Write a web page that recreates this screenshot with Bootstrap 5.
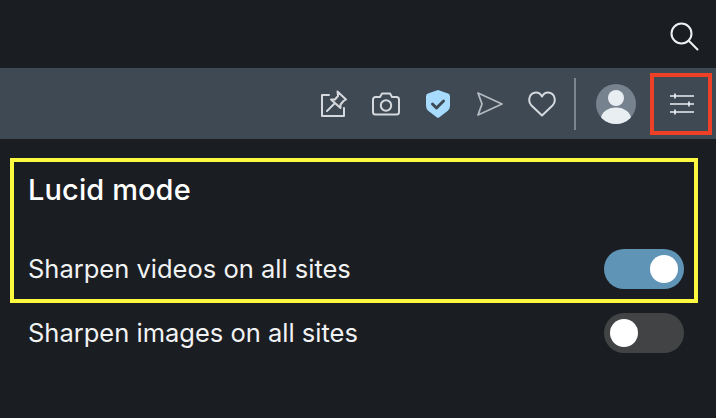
<!DOCTYPE html>
<html lang="en">
<head>
<meta charset="utf-8">
<title>Lucid mode</title>
<link rel="stylesheet" href="https://cdn.jsdelivr.net/npm/bootstrap@5.3.0/dist/css/bootstrap.min.css">
<style>
html, body { height: 100%; }
body { background: #1a1d21; color: #f4f5f6; font-family: Inter, "Liberation Sans", sans-serif; overflow: hidden; }
.top-strip { height: 68px; padding: 5px 17px 0 0; }
.tool-strip { height: 71px; background: #3e4954; }
.tool-btn { width: 52px; height: 52px; }
.tool-rule { width: 2px; height: 52px; background: #7c8690; margin: 0 20px 0 6px; }
.avatar-disc { width: 40px; height: 40px; }
.menu-frame { width: 62px; height: 62px; border: 4px solid #ee4026; margin: 0 4px 0 14px; padding-left: 2px; }
.panel-zone { padding: 19px 18px 0 10px; }
.lucid-frame { height: 145px; border: 4px solid #fdf93f; padding: 0 10px 10px 14px; }
.lucid-title { font-size: 29px; font-weight: 500; letter-spacing: .1px; line-height: 1; margin: 0; padding-top: 13px; color: #fff; }
.opt-label { font-size: 25.5px; line-height: 44px; color: #f1f2f3; }
.opt-row { height: 40px; }
.opt-plain { margin-top: 10px; padding: 0 14px 0 18px; }
.form-switch.lucid-switch { padding: 0; margin: 0; min-height: 0; height: 40px; }
.form-switch.lucid-switch .form-check-input { width: 80px; height: 40px; margin: 0; float: none; display: block; border: 0; border-radius: 20px; background-color: #424345; background-image: url("data:image/svg+xml,%3csvg xmlns='http://www.w3.org/2000/svg' viewBox='-4 -4 8 8'%3e%3ccircle r='2.8' fill='%23fff'/%3e%3c/svg%3e"); box-shadow: none; }
.form-switch.lucid-switch .form-check-input:checked { background-color: #5f94b7; }
</style>
</head>
<body>
<div class="top-strip d-flex justify-content-end align-items-center">
  <svg width="29" height="29" viewBox="0 0 29 29" fill="none" stroke="#eef0f2" stroke-width="2" stroke-linecap="round"><circle cx="11.500" cy="11.500" r="10"/><path d="M18.800 18.800 27.500 27.500"/></svg>
</div>
<div class="tool-strip d-flex justify-content-end align-items-center">
  <div class="tool-btn d-flex justify-content-center align-items-center">
    <svg width="28" height="28" viewBox="0 0 28 28" fill="none" stroke="#d5d9dd" stroke-width="2" stroke-linejoin="round" stroke-linecap="round"><path d="M9 5H2v21h22v-8"/><path d="M17.500 1.500 26 9.500l-2.500 1.500-3 3.500v3.500L11 9.500h4l3-3.500z"/><path d="M14 14 7 21"/></svg>
  </div>
  <div class="tool-btn d-flex justify-content-center align-items-center">
    <svg width="28" height="24" viewBox="0 0 28 24" fill="none" stroke="#d5d9dd" stroke-width="2" stroke-linejoin="round"><path d="M3.500 5H8l2-3.500h8L20 5h4.500A2.500 2.500 0 0 1 27 7.500v12.500a2.500 2.500 0 0 1-2.500 2.500h-21A2.500 2.500 0 0 1 1 20V7.500A2.500 2.500 0 0 1 3.500 5z"/><circle cx="14" cy="13.500" r="5.200"/></svg>
  </div>
  <div class="tool-btn d-flex justify-content-center align-items-center">
    <svg width="24" height="28" viewBox="0 0 24 28"><path d="M12 0 22 3.500Q24 4.200 24 6.500V16Q24 19 21.500 21L13 27.500Q12 28 11 27.500L2.500 21Q0 19 0 16V6.500Q0 4.200 2 3.500z" fill="#a8dcff"/><path d="M6.500 14 10.500 18 17.500 11" fill="none" stroke="#3e4954" stroke-width="3" stroke-linecap="round" stroke-linejoin="round"/></svg>
  </div>
  <div class="tool-btn d-flex justify-content-center align-items-center">
    <svg width="26" height="24" viewBox="0 0 26 24" fill="none" stroke="#b4babf" stroke-width="1.800" stroke-linejoin="round"><path d="M1 1 25 12 1 23 5 12z"/></svg>
  </div>
  <div class="tool-btn d-flex justify-content-center align-items-center">
    <svg width="28" height="26" viewBox="0 0 28 26" fill="none" stroke="#d5d9dd" stroke-width="2" stroke-linejoin="round"><path d="M14 24.500 3.500 14.500C-.5 10.500 1 3 6.500 1.800 10 1 12.500 3 14 5.500 15.500 3 18 1 21.500 1.800 27 3 28.500 10.500 24.500 14.500z"/></svg>
  </div>
  <div class="tool-rule"></div>
  <svg class="avatar-disc" viewBox="0 0 40 40"><clipPath id="avatarClip"><circle cx="20" cy="20" r="20"/></clipPath><circle cx="20" cy="20" r="20" fill="#77828f"/><circle cx="20" cy="14" r="8" fill="#e9eef3"/><ellipse cx="20" cy="35" rx="15" ry="11.500" fill="#e9eef3" clip-path="url(#avatarClip)"/></svg>
  <div class="menu-frame d-flex justify-content-center align-items-center">
    <svg width="24" height="22" viewBox="0 0 24 22" fill="none" stroke="#e9eef3" stroke-width="1.700"><path d="M0 3H24M0 11H24M0 19H24"/><path d="M5 .5V5.500M19 8.500V13.500M5 16.500V21.500"/></svg>
  </div>
</div>
<div class="panel-zone">
  <div class="lucid-frame d-flex flex-column justify-content-between">
    <h1 class="lucid-title">Lucid mode</h1>
    <div class="opt-row d-flex justify-content-between align-items-center">
      <label class="opt-label" for="sharpVideos">Sharpen videos on all sites</label>
      <div class="form-check form-switch lucid-switch"><input class="form-check-input" type="checkbox" role="switch" id="sharpVideos" checked></div>
    </div>
  </div>
  <div class="opt-row opt-plain d-flex justify-content-between align-items-center">
    <label class="opt-label" for="sharpImages">Sharpen images on all sites</label>
    <div class="form-check form-switch lucid-switch"><input class="form-check-input" type="checkbox" role="switch" id="sharpImages"></div>
  </div>
</div>
</body>
</html>
